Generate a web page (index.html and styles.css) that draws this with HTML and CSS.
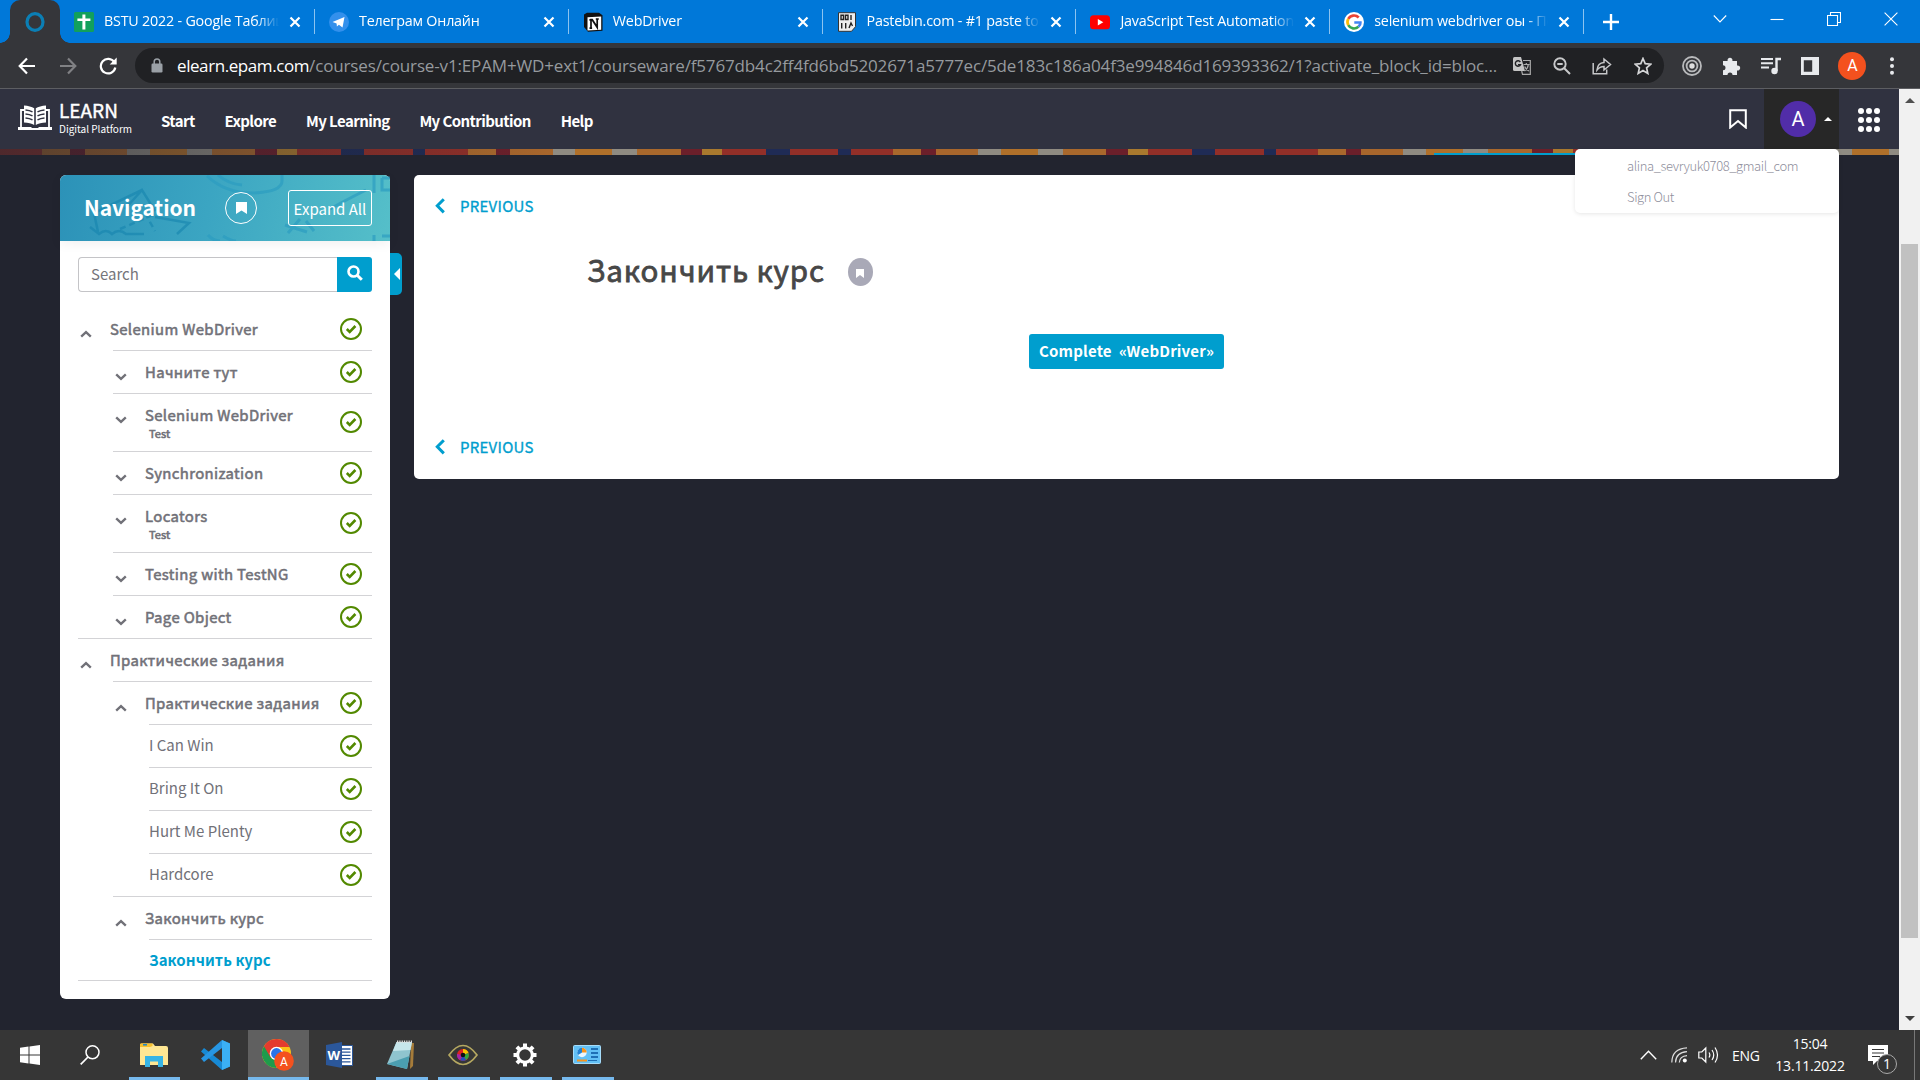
FILE: index.html
```html
<!DOCTYPE html>
<html lang="ru">
<head>
<meta charset="utf-8">
<title>Закончить курс</title>
<link rel="stylesheet" href="styles.css">
</head>
<body>
<svg class="defs" aria-hidden="true">
  <symbol id="x" viewBox="0 0 12 12"><path d="M1.5 1.5l9 9M10.5 1.5l-9 9" stroke="#fff" stroke-width="2.2"/></symbol>
  <symbol id="check" viewBox="0 0 22 22"><circle cx="11" cy="11" r="10" fill="none" stroke="#528900" stroke-width="2"/><path d="M6.8 11l2.9 2.9 5.7-5.9" fill="none" stroke="#528900" stroke-width="2.6"/></symbol>
  <symbol id="up" viewBox="0 0 12 8"><path d="M1.2 6.6L6 2.2l4.8 4.4" fill="none" stroke="#717178" stroke-width="2.4"/></symbol>
  <symbol id="down" viewBox="0 0 12 8"><path d="M1.2 1.4L6 5.8l4.8-4.4" fill="none" stroke="#717178" stroke-width="2.4"/></symbol>
  <symbol id="left" viewBox="0 0 10 16"><path d="M8.8 1.2L2.3 7.8l6.5 6.6" fill="none" stroke="#009ece" stroke-width="3"/></symbol>
</svg>

<header class="tabs">
  <div class="tab-active"><svg width="20" height="22" viewBox="0 0 20 22"><ellipse cx="10" cy="11" rx="8" ry="8.3" fill="none" stroke="#0b7fb5" stroke-width="3.2"/></svg></div>
  <div class="tab">
    <svg class="fav" viewBox="0 0 20 20"><rect width="20" height="20" rx="1.5" fill="#12a05c"/><path d="M8.4 2.5h3v4h5v2.6h-5v8.4h-3V9.100h-5V6.500h5z" fill="#fff"/></svg>
    <span class="tab-title">BSTU 2022 - Google Таблицы</span><svg class="close"><use href="#x"/></svg>
  </div>
  <div class="tab">
    <svg class="fav" viewBox="0 0 20 20"><circle cx="10" cy="10" r="10" fill="#3390ec"/><path d="M3.500 10L15.500 5l-2 10.500-3.600-2.700-2 1.800-.3-3.200z" fill="#fff"/></svg>
    <span class="tab-title">Телеграм Онлайн</span><svg class="close"><use href="#x"/></svg>
  </div>
  <div class="tab">
    <svg class="fav" viewBox="0 0 20 20"><path d="M1 2.500L4 .7h12l3.500 2.500v15.500L5 19.700 1 15z" fill="#111"/><path d="M4.500 5.200l13.700-.8v13.300l-13.700.9z" fill="#fff"/><path d="M8 16V7.700h1.200l5 7.600V7M6.400 7.800h2.500M12.800 7h3M6.500 16.200h2.600" fill="none" stroke="#111" stroke-width="1.700"/></svg>
    <span class="tab-title">WebDriver</span><svg class="close"><use href="#x"/></svg>
  </div>
  <div class="tab">
    <svg class="fav" viewBox="0 0 20 20"><path d="M1.500.7h17v14l-4 4.600h-13z" fill="#eee" stroke="#333"/><path d="M4 3.200h2.500v4.300H4zM8.500 3.200H11v4.300H8.500zM14 3v5M4.700 11v5.500M8.700 11v5.500M12 16l2-5 1.500 3" fill="none" stroke="#222" stroke-width="1.400"/></svg>
    <span class="tab-title">Pastebin.com - #1 paste tool</span><svg class="close"><use href="#x"/></svg>
  </div>
  <div class="tab">
    <svg class="fav" viewBox="0 0 20 20"><rect y="3.200" width="20" height="14" rx="3.500" fill="#f00"/><path d="M7.800 7l5.500 3.200-5.500 3.200z" fill="#fff"/></svg>
    <span class="tab-title">JavaScript Test Automation</span><svg class="close"><use href="#x"/></svg>
  </div>
  <div class="tab">
    <svg class="fav" viewBox="0 0 20 20"><circle cx="10" cy="10" r="10" fill="#fff"/><g fill="none" stroke-width="2.700"><path d="M14.700 5.500A6.500 6.500 0 0 0 4.300 6.900" stroke="#ea4335"/><path d="M4.300 6.900a6.500 6.500 0 0 0 0 6.200" stroke="#fbbc05"/><path d="M4.300 13.100a6.500 6.500 0 0 0 10.100 1.700" stroke="#34a853"/><path d="M14.400 14.800c1.500-1.300 2.100-2.900 2-4.300H10.300" stroke="#4285f4"/></g></svg>
    <span class="tab-title">selenium webdriver оы - Поиск</span><svg class="close"><use href="#x"/></svg>
  </div>
  <svg class="plus" viewBox="0 0 16 16"><path d="M8 0v16M0 8h16" stroke="#fff" stroke-width="2.400"/></svg>
  <div class="win">
    <svg width="14" height="14" viewBox="0 0 14 14"><path d="M.8 3.500L7 10l6.200-6.500"/></svg>
    <svg width="14" height="14" viewBox="0 0 14 14"><path d="M.5 7.500h13"/></svg>
    <svg width="14" height="14" viewBox="0 0 14 14"><path d="M.5 3.500h10v10H.5zM3.500 3.500v-3h10v10h-3"/></svg>
    <svg width="14" height="14" viewBox="0 0 14 14"><path d="M.6.6l12.800 12.800M13.400.6L.6 13.400"/></svg>
  </div>
</header>

<div class="toolbar">
  <div class="navbtns">
    <svg width="18" height="18" viewBox="0 0 18 18"><path d="M17 9H2M9 1.500L1.700 9 9 16.500" fill="none" stroke="#fff" stroke-width="2.200"/></svg>
    <svg width="18" height="18" viewBox="0 0 18 18"><path d="M1 9h15M9 1.500L16.300 9 9 16.500" fill="none" stroke="#808184" stroke-width="2.200"/></svg>
    <svg width="18" height="18" viewBox="0 0 18 18"><path d="M15.300 5.200A7.300 7.300 0 1 0 16.300 10.500" fill="none" stroke="#fff" stroke-width="2.200"/><path d="M17.700.6v7h-7z" fill="#fff"/></svg>
  </div>
  <div class="omnibox">
    <svg width="12" height="15" viewBox="0 0 12 15"><rect x=".5" y="5.500" width="11" height="9" rx="1.200" fill="#9aa0a6"/><path d="M3.200 6V3.800a2.800 2.800 0 0 1 5.600 0V6" fill="none" stroke="#9aa0a6" stroke-width="1.500"/></svg>
    <span class="url"><b>elearn.epam.com</b>/courses/course-v1:EPAM+WD+ext1/courseware/f5767db4c2ff4fd6bd5202671a5777ec/5de183c186a04f3e994846d169393362/1?activate_block_id=bloc...</span>
    <div class="omni-icons">
      <svg width="18" height="18" viewBox="0 0 18 18"><path d="M0 1.500Q0 0 1.500 0H8l4 14H1.500Q0 14 0 12.500z" fill="#c4c4c4"/><path d="M7.300 5A2.700 2.700 0 1 0 7.500 7.600H5" fill="none" stroke="#202124" stroke-width="1.400"/><path d="M10 3.500h7.300v13.800H9.500L8.700 14M10.500 7.500h6M13.300 6v1.500M11.500 14q3.500-2.500 3.800-6.500M11.700 9.500q1 3 4.300 4.500" fill="none" stroke="#aaa" stroke-width="1.200"/></svg>
      <svg width="18" height="18" viewBox="0 0 18 18"><circle cx="7" cy="7" r="5.700" fill="none" stroke="#c7c8ca" stroke-width="1.900"/><path d="M11 11l6 6M4.300 7h5.400" stroke="#c7c8ca" stroke-width="2"/></svg>
      <svg width="20" height="18" viewBox="0 0 20 18"><path d="M1.200 6v10.800h13.500v-4.300M5 13c.5-5 3.500-7.300 7-7.500V2l6.500 5.500L12 13V9.500c-3 0-5 1-7 3.500z" fill="none" stroke="#c7c8ca" stroke-width="1.500"/></svg>
      <svg width="18" height="18" viewBox="0 0 18 18"><path d="M9 1.500l2.200 5.200 5.600.5-4.200 3.700 1.200 5.500L9 13.500l-4.800 2.900 1.200-5.500L1.200 7.200l5.600-.5z" fill="none" stroke="#d5d6d8" stroke-width="1.700"/></svg>
    </div>
  </div>
  <div class="ext">
    <svg width="20" height="20" viewBox="0 0 20 20"><g fill="none" stroke="#b9babc" stroke-width="1.800"><circle cx="10" cy="10" r="9"/><circle cx="10" cy="10" r="5.400"/></g><circle cx="10" cy="10" r="2.700" fill="#ddd"/></svg>
    <svg width="20" height="20" viewBox="0 0 20 20"><path d="M1 5h4.600a2.500 2.500 0 1 1 4.800 0H15v4.600a2.500 2.500 0 1 1 0 4.800V19h-4.500a2.500 2.500 0 0 0-5 0H1v-4.700a2.500 2.500 0 0 0 0-5z" fill="#e8eaed"/></svg>
    <svg width="20" height="18" viewBox="0 0 20 18"><path d="M0 2h12M0 6.300h12M0 10.600h8" stroke="#e8eaed" stroke-width="2"/><path d="M15.500 14V2H20" fill="none" stroke="#e8eaed" stroke-width="2.400"/><circle cx="13.500" cy="14" r="3.200" fill="#e8eaed"/></svg>
    <svg width="18" height="18" viewBox="0 0 18 18"><path d="M0 0h18v18H0zM2.800 3.200v11.600h8.400V3.200z" fill="#e8eaed" fill-rule="evenodd"/></svg>
    <span class="profile">A</span>
    <svg width="4" height="18" viewBox="0 0 4 18"><g fill="#e8eaed"><circle cx="2" cy="2.200" r="2"/><circle cx="2" cy="9" r="2"/><circle cx="2" cy="15.800" r="2"/></g></svg>
  </div>
</div>

<div class="viewport">
  <div class="page">
    <header class="site">
      <a class="logo">
        <svg width="34" height="26" viewBox="0 0 34 26"><path d="M3 22V5h3M31 22V5h-3" fill="none" stroke="#fff" stroke-width="1.800"/><path d="M6 .5c4 .3 8 1.200 10.200 2.700V20C14 18.500 10 17.500 6 17.500zM28 .5c-4 .3-8 1.200-10.200 2.700V20C20 18.500 24 17.500 28 17.500z" fill="#fff"/><path d="M7.500 5q4 .3 7 1.800M7.500 9q4 .3 7 1.800M7.500 13q4 .3 7 1.800M26.500 5q-4 .3-7 1.800M26.500 9q-4 .3-7 1.800M26.500 13q-4 .3-7 1.800" fill="none" stroke="#303240" stroke-width="1.500"/><path d="M0 22h13l1 1h6l1-1h13v3H0z" fill="#fff"/></svg>
        <span class="logo-text"><span class="l1">LEARN</span><span class="l2">Digital Platform</span></span>
      </a>
      <nav><a>Start</a><a>Explore</a><a>My Learning</a><a>My Contribution</a><a>Help</a></nav>
      <div class="site-right">
        <svg class="bm" width="18" height="20" viewBox="0 0 18 20"><path d="M1.200 1.200h15.600V18.500L9 12l-7.800 6.500z" fill="none" stroke="#fff" stroke-width="2"/></svg>
        <div class="user"><span class="avatar">A</span><svg width="8" height="4" viewBox="0 0 8 4"><path d="M0 4l4-4 4 4z" fill="#fff"/></svg>
          <div class="menu"><a>alina_sevryuk0708_gmail_com</a><a>Sign Out</a></div>
        </div>
        <svg class="grid" width="22" height="24" viewBox="0 0 22 24"><g fill="#fff"><circle cx="3" cy="3" r="3"/><circle cx="11" cy="3" r="3"/><circle cx="19" cy="3" r="3"/><circle cx="3" cy="12" r="3"/><circle cx="11" cy="12" r="3"/><circle cx="19" cy="12" r="3"/><circle cx="3" cy="21" r="3"/><circle cx="11" cy="21" r="3"/><circle cx="19" cy="21" r="3"/></g></svg>
      </div>
    </header>
    <div class="banner"><i></i></div>
    <div class="content">
      <aside class="side">
        <div class="side-head">
          <svg class="art" width="330" height="66" viewBox="0 0 330 66"><g fill="none" stroke="#1683ad" stroke-opacity=".6" stroke-width="2.500"><path d="M65 34L82 15l13 21M38 57L34 38l48-23M95 42l34 6-12 11M30 52l9 7q7-6 13 0 7-6 14 0h18"/><path d="M60 54l35-15M85 38l10 18" stroke-dasharray="6 4"/></g><g fill="none" stroke="#2c9cc0" stroke-opacity=".7" stroke-width="3"><path d="M147 1q18 17 45 17 30-1 30-12V0M158 0q10 9 24 10M148 60q5 6 12 6M163 61q8 5 13 5M225 50l22 7M240 44l-12 14M246 46l8 10M270 34q14-8 36-19M314 0v18M322 3h8M322 3v12h8M314 60v6M322 61h8"/></g></svg>
          <h2>Navigation</h2>
          <span class="ring"><svg width="11" height="12" viewBox="0 0 11 12"><path d="M0 0h11v12L5.500 8.500 0 12z" fill="#fff"/></svg></span>
          <button class="expand">Expand All</button>
        </div>
        <div class="search"><span class="field">Search</span><span class="go"><svg width="16" height="16" viewBox="0 0 16 16"><circle cx="6.500" cy="6.500" r="5" fill="none" stroke="#fff" stroke-width="2.600"/><path d="M10.200 10.200l4.600 4.600" stroke="#fff" stroke-width="3"/></svg></span></div>
        <span class="toggle"><svg width="6" height="12" viewBox="0 0 6 12"><path d="M6 0v12L0 6z" fill="#fff"/></svg></span>
        <ul class="tree">
          <li>
            <div class="row"><svg class="chev"><use href="#up"/></svg><span class="name">Selenium WebDriver</span><svg class="ok"><use href="#check"/></svg></div>
            <ul class="sub">
              <li><div class="row"><svg class="chev"><use href="#down"/></svg><span class="name">Начните тут</span><svg class="ok"><use href="#check"/></svg></div></li>
              <li><div class="row tall"><svg class="chev"><use href="#down"/></svg><span class="name">Selenium WebDriver<small>Test</small></span><svg class="ok"><use href="#check"/></svg></div></li>
              <li><div class="row"><svg class="chev"><use href="#down"/></svg><span class="name">Synchronization</span><svg class="ok"><use href="#check"/></svg></div></li>
              <li><div class="row tall"><svg class="chev"><use href="#down"/></svg><span class="name">Locators<small>Test</small></span><svg class="ok"><use href="#check"/></svg></div></li>
              <li><div class="row"><svg class="chev"><use href="#down"/></svg><span class="name">Testing with TestNG</span><svg class="ok"><use href="#check"/></svg></div></li>
              <li><div class="row"><svg class="chev"><use href="#down"/></svg><span class="name">Page Object</span><svg class="ok"><use href="#check"/></svg></div></li>
            </ul>
          </li>
          <li>
            <div class="row"><svg class="chev"><use href="#up"/></svg><span class="name">Практические задания</span></div>
            <ul class="sub">
              <li><div class="row"><svg class="chev"><use href="#up"/></svg><span class="name">Практические задания</span><svg class="ok"><use href="#check"/></svg></div>
                <ul class="leaf">
                  <li><div class="row"><span>I Can Win</span><svg class="ok"><use href="#check"/></svg></div></li>
                  <li><div class="row"><span>Bring It On</span><svg class="ok"><use href="#check"/></svg></div></li>
                  <li><div class="row"><span>Hurt Me Plenty</span><svg class="ok"><use href="#check"/></svg></div></li>
                  <li><div class="row"><span>Hardcore</span><svg class="ok"><use href="#check"/></svg></div></li>
                </ul>
              </li>
              <li><div class="row"><svg class="chev"><use href="#up"/></svg><span class="name">Закончить курс</span></div>
                <ul class="leaf"><li><div class="row current"><span>Закончить курс</span></div></li></ul>
              </li>
            </ul>
          </li>
        </ul>
      </aside>
      <main class="card">
        <a class="prev"><svg width="10" height="16"><use href="#left"/></svg>PREVIOUS</a>
        <div class="title"><h1>Закончить курс</h1><span class="dot"><svg width="8" height="9" viewBox="0 0 8 9"><path d="M0 0h8v9L4 6 0 9z" fill="#fff"/></svg></span></div>
        <button class="complete">Complete&nbsp; «WebDriver»</button>
        <a class="prev bottom"><svg width="10" height="16"><use href="#left"/></svg>PREVIOUS</a>
      </main>
    </div>
  </div>
  <div class="scroll">
    <svg width="10" height="5" viewBox="0 0 10 5"><path d="M0 5l5-5 5 5z" fill="#505050"/></svg>
    <div class="thumb"></div>
    <svg width="10" height="5" viewBox="0 0 10 5"><path d="M0 0l5 5 5-5z" fill="#404040"/></svg>
  </div>
</div>

<footer class="taskbar">
  <div class="app"><svg width="20" height="20" viewBox="0 0 20 20"><path d="M0 2.800L8.500 1.500v8H0zM9.500 1.400L20 0v9.500H9.500zM0 10.500h8.500v8L0 17.200zM9.500 10.500H20V20L9.500 18.600z" fill="#fff"/></svg></div>
  <div class="app find"><svg width="20" height="20" viewBox="0 0 20 20"><circle cx="12.500" cy="7.300" r="6.500" fill="none" stroke="#fff" stroke-width="1.500"/><path d="M8 12L.7 19.300" stroke="#fff" stroke-width="1.700"/></svg></div>
  <div class="app open"><svg width="28" height="24" viewBox="0 0 28 24"><path d="M0 2Q0 .5 1.500.5H13l2 2.500h11q2 0 2 2v17H0z" fill="#ffe793"/><path d="M0 4V1.500Q0 .5 1 .5h11.500V3L10 4z" fill="#f7c02d"/><path d="M3 1.800h4" stroke="#1b86c9" stroke-width="1.500"/><path d="M5 24V13h18v11h-5v-5.500h-8V24z" fill="#36b4e5"/></svg></div>
  <div class="app"><svg width="30" height="30" viewBox="0 0 30 30"><path d="M22 0l8 3.500v23L22 30 1 11.500 4 8l18 14V8.500z" fill="#1789d4"/><path d="M22 8L4 22l-3-3.500L22 0z" fill="#2796e3"/><path d="M22 0l8 3.500v23L22 30z" fill="#3bb0f5"/></svg></div>
  <div class="app open active"><svg width="32" height="32" viewBox="0 0 32 32"><circle cx="14.500" cy="14.500" r="14.500" fill="#fbc116"/><path d="M14.500 14.500L2 7.200A14.500 14.500 0 0 0 14.500 29z" fill="#1e9b4c"/><path d="M14.500 8h12.900A14.500 14.500 0 0 0 2 7.200l7 12z" fill="#e33b2e"/><circle cx="14.500" cy="14.500" r="6.800" fill="#fff"/><circle cx="14.500" cy="14.500" r="5.400" fill="#2a74e8"/><circle cx="22" cy="22" r="9.800" fill="#f4511e"/><text x="22" y="26.500" text-anchor="middle" class="badge-letter">A</text></svg></div>
  <div class="app"><svg width="27" height="26" viewBox="0 0 27 26"><path d="M14 3.500h12.500v20H14z" fill="#fff" stroke="#2b579a"/><path d="M16 7h8.500M16 10.200h8.500M16 13.400h8.500M16 16.600h8.500M16 19.800h8.500" stroke="#2b579a" stroke-width="1.300"/><path d="M0 3L16 0v26L0 23z" fill="#2b579a"/><text x="7.700" y="18" text-anchor="middle" class="word-letter">W</text></svg></div>
  <div class="app open"><svg width="28" height="32" viewBox="0 0 28 32"><path d="M24 4h3l-1 23-3 3z" fill="#a67c3a"/><path d="M9.500 3h15.500L20 30 0 25z" fill="#8fc4cf"/><path d="M9.500 3h15.500l-1.500 8L6 12z" fill="#c7e6eb"/><path d="M20 30l2.500-13L0 25z" fill="#4b9eb0"/><path d="M10 2.800h15" stroke="#ddd" stroke-width="2.500" stroke-dasharray="1.300 1"/></svg></div>
  <div class="app open"><svg width="30" height="22" viewBox="0 0 30 22"><path d="M1 11Q8 1.500 15 1.500T29 11Q22 20.500 15 20.500T1 11z" fill="none" stroke="#b5a861" stroke-width="1.700"/><circle cx="15" cy="11" r="6" fill="#d22"/><path d="M15 11V5a6 6 0 0 1 5.500 4z" fill="#f8c400"/><path d="M15 11l5.500-2a6 6 0 0 1-2.500 7z" fill="#2fa83f"/><path d="M15 11l3 5a6 6 0 0 1-6 0z" fill="#244fc0"/><path d="M15 11l-3 5a6 6 0 0 1-3-6z" fill="#a226a8"/><circle cx="15" cy="11" r="2.300" fill="#111"/></svg></div>
  <div class="app open"><svg width="24" height="24" viewBox="0 0 24 24"><circle cx="12" cy="12" r="7.300" fill="none" stroke="#fff" stroke-width="3"/><path d="M12 .5v4M12 19.500v4M.5 12h4M19.500 12h4M3.900 3.900l2.800 2.800M17.300 17.300l2.800 2.800M3.900 20.100l2.800-2.800M17.300 6.700l2.800-2.800" stroke="#fff" stroke-width="4"/></svg></div>
  <div class="app open"><svg width="28" height="20" viewBox="0 0 28 20"><rect x=".5" y=".5" width="27" height="18" rx="1" fill="#62c0f5" stroke="#a6dcfa"/><circle cx="9" cy="7.500" r="4.700" fill="#e8f6ff"/><path d="M9 7.500V2.800a4.700 4.700 0 0 1 4.700 4.700z" fill="#f7941d"/><path d="M9 7.500l-4 2.500a4.700 4.700 0 0 1 4-7.200z" fill="#2281d1"/><path d="M18 4h7M18 8h7M18 12h7" stroke="#1f6fb5" stroke-width="2"/><path d="M4 15.500h10" stroke="#f7941d" stroke-width="2"/><path d="M15 15.500h9" stroke="#1f6fb5"/></svg></div>
  <div class="tray">
    <svg width="17" height="10" viewBox="0 0 17 10"><path d="M.8 9.200L8.500 1.200l7.700 8" fill="none" stroke="#fff" stroke-width="1.400"/></svg>
    <svg class="wifi" width="17" height="16" viewBox="0 0 17 16"><g fill="none" stroke="#ddd" stroke-width="1.200"><path d="M.8 15.500Q1 1.500 16 .8M4.500 15.500Q4.800 5.500 16 4.700M8.300 15.500Q8.600 9.200 16 8.600"/></g><circle cx="13.800" cy="13.400" r="2" fill="#fff"/></svg>
    <svg class="vol" width="21" height="18" viewBox="0 0 21 18"><g fill="none" stroke="#fff" stroke-width="1.200"><path d="M.8 6h3l4-4v14l-4-4h-3zM11 6.500q1.700 2.500 0 5M14 4q3.500 5 0 10M17 1.500q5 7.500 0 15"/></g></svg>
    <span class="lang">ENG</span>
    <span class="clock"><span>15:04</span><span>13.11.2022</span></span>
    <span class="note"><svg width="20" height="20" viewBox="0 0 20 20"><path d="M0 0h20v16H9l-4 4v-4H0z" fill="#fff"/><path d="M4 4.500h12M4 8h12M4 11.500h8" stroke="#363636" stroke-width="1.200"/></svg><i>1</i></span>
    <span class="peek"></span>
  </div>
</footer>
</body>
</html>
```
FILE: styles.css
```css
* { box-sizing: border-box; }
body {
  margin: 0; width: 1920px; height: 1080px; overflow: hidden;
  display: flex; flex-direction: column; background: #22242f;
  font-family: "Noto Sans CJK SC", "Noto Sans", sans-serif;
}
svg { display: block; flex: none; }
ul { list-style: none; margin: 0; padding: 0; }
button { font-family: inherit; padding: 0; }
.defs { position: absolute; width: 0; height: 0; }

/* browser tabs */
.tabs, .toolbar, .taskbar { font-family: "Open Sans", "Noto Sans", sans-serif; }
.tabs { flex: none; height: 43px; display: flex; align-items: center; background: #0078d9; padding-left: 10px; color: #fff; }
.tab-active { position: relative; width: 50px; height: 43px; background: #35363a; border-radius: 10px 10px 0 0; display: flex; align-items: center; justify-content: center; }
.tab-active::before, .tab-active::after { content: ""; position: absolute; bottom: 0; width: 10px; height: 10px; }
.tab-active::before { left: -10px; background: radial-gradient(circle at 0 0, transparent 9.5px, #35363a 10px); }
.tab-active::after { right: -10px; background: radial-gradient(circle at 100% 0, transparent 9.5px, #35363a 10px); }
.tab { width: 253.800px; height: 25px; padding: 0 13px 0 14px; display: flex; align-items: center; border-right: 1px solid #8cc3f0; }
.tab-active + .tab { width: 255px; }
.fav { width: 20px; height: 20px; }
.tab-title { flex: 1; margin: -2px 10px 0; height: 24px; line-height: 24px; font-size: 14.300px; letter-spacing: -.2px; white-space: nowrap; overflow: hidden; -webkit-mask: linear-gradient(90deg, #000 calc(100% - 22px), transparent); mask: linear-gradient(90deg, #000 calc(100% - 22px), transparent); }
.close { width: 12px; height: 12px; }
.plus { width: 16px; height: 16px; margin-left: 19px; }
.win { margin: 0 22px 5px auto; display: flex; gap: 43px; }
.win path { fill: none; stroke: #fff; stroke-width: 1.100; }

/* address bar */
.toolbar { flex: none; height: 46px; display: flex; align-items: center; background: #35363a; border-bottom: 1px solid #5d5e62; padding: 0 26px 0 18px; }
.navbtns { display: flex; gap: 22.500px; width: 117px; }
.omnibox { width: 1529px; height: 35px; border-radius: 18px; background: #202124; display: flex; align-items: center; padding: 0 12px 0 16px; }
.url { margin-left: 14px; width: 1321px; white-space: nowrap; color: #969a9e; font-size: 17px; letter-spacing: -.145px; }
.url b { font-weight: 400; color: #fff; letter-spacing: -.42px; }
.omni-icons { margin-left: auto; display: flex; gap: 21.700px; }
.ext { flex: 1; margin-left: 18px; display: flex; align-items: center; justify-content: space-between; }
.profile { width: 28px; height: 28px; margin-right: 4px; border-radius: 50%; background: #f4511e; color: #fff; font: 16px/28px Roboto, sans-serif; text-align: center; }

/* page */
.viewport { height: 941px; display: flex; }
.page { flex: none; width: 1899px; }
.site { height: 60px; background: #303240; display: flex; align-items: center; padding-left: 18px; color: #fff; }
.logo { display: flex; width: 143px; gap: 7px; align-items: center; }
.logo svg { margin-bottom: 2px; }
.logo-text { display: flex; flex-direction: column; margin-top: -5px; }
.l1 { font-size: 19px; line-height: 24px; -webkit-text-stroke: .4px #fff; }
.l2 { font-size: 10px; line-height: 13px; white-space: nowrap; }
.site nav { display: flex; gap: 29.800px; font-size: 15px; font-weight: 700; letter-spacing: -.58px; line-height: 20px; padding-top: 4px; }
.site-right { margin-left: auto; display: flex; align-items: center; height: 60px; }
.bm { margin-right: 17px; }
.user { position: relative; width: 75px; height: 60px; background: #272727; display: flex; align-items: center; padding-left: 16px; gap: 8px; }
.avatar { width: 36px; height: 36px; border-radius: 50%; background: #512da8; font: 20px/37px Roboto, sans-serif; text-align: center; }
.grid { margin: 2px 19px 0; }
.menu { position: absolute; right: 0; top: 60px; z-index: 2; width: 264px; height: 64px; background: #fff; border-radius: 5px; box-shadow: 0 1px 4px rgba(0,0,0,.1); padding: 1px 0 0 52px; display: flex; flex-direction: column; }
.menu a { color: #8f8f9c; font-size: 13px; font-weight: 300; letter-spacing: -.4px; line-height: 31px; }
.banner { height: 6px; position: relative; background:
  linear-gradient(90deg, rgba(34,36,47,.6), rgba(34,36,47,0) 550px),
  repeating-linear-gradient(90deg, #922f28 0 42px, #a9682c 42px 70px, #6b1f2a 70px 85px, #a8662c 85px 127px, #8f8b82 127px 150px, #b0702a 150px 187px, #8f8b82 187px 212px, #a9682c 212px 255px, #6b1f2a 255px 277px, #a9792e 277px 297px, #922f28 297px 341px, #1f2b55 341px 364px, #922f28 364px 413px, #1f2b55 413px 425.500px); }
.banner i { position: absolute; left: 1434px; bottom: 0; width: 141px; height: 2px; background: #009ece; }
.content { padding: 20px 60px; display: flex; align-items: flex-start; gap: 24px; }

.side { position: relative; width: 330px; height: 824px; background: #fff; border-radius: 6px; flex: none; }
.side-head { position: relative; height: 66px; border-radius: 6px 6px 0 0; background: linear-gradient(100deg, #2c92b8, #3ba5c2 45%, #55bfc9); display: flex; align-items: center; padding: 0 18px 0 24px; color: #fff; box-shadow: 0 3px 12px rgba(0,0,0,.06); }
.side-head > * { position: relative; }
.side-head > .art { position: absolute; left: 0; top: 0; }
h2 { margin: -2px 0 0; font-size: 21px; font-weight: 700; letter-spacing: -.06px; line-height: 30px; width: 141px; }
.ring { width: 32px; height: 32px; border: 1px solid #fff; border-radius: 50%; display: flex; align-items: center; justify-content: center; }
.expand { margin-left: auto; width: 84px; height: 36px; border: 1px solid #fff; border-radius: 3px; background: none; color: #fff; font-size: 15px; line-height: 31px; white-space: nowrap; }
.search { margin: 16px 18px 0; height: 35px; display: flex; }
.field { flex: 1; border: 1px solid #c4c4c7; border-right: 0; border-radius: 4px 0 0 4px; padding-left: 12px; font-size: 15px; line-height: 32px; color: #75757a; }
.go { width: 35px; background: #009ece; border-radius: 0 3px 3px 0; display: flex; align-items: center; justify-content: center; padding-bottom: 3px; }
.toggle { position: absolute; left: 330px; top: 78px; width: 12px; height: 42px; background: #009ece; border-radius: 0 5px 5px 0; display: flex; align-items: center; padding-left: 4px; }

.tree { margin: 16px 18px 0; color: #717178; font-size: 15px; }
.tree > li { border-bottom: 1px solid #d3d3d6; }
.row { height: 42px; display: flex; padding: 9px 10px 0 2px; line-height: 22px; }
.name { margin: 1px 0 0 19px; font-size: 14.900px; -webkit-text-stroke: .55px #717178; letter-spacing: .37px; white-space: nowrap; }
.chev { width: 12px; height: 8px; margin: 13px -1px 0 0; }
.ok { width: 22px; height: 22px; margin-left: auto; margin-top: 1px; }
.tall { height: 57px; }
.tall .ok { margin-top: 8px; }
small { display: block; font-size: 11px; line-height: 14px; margin-left: 4px; letter-spacing: .1px; -webkit-text-stroke: .6px #717178; }
.sub { margin-left: 35px; }
.sub > li, .leaf > li { border-top: 1px solid #d3d3d6; }
.leaf { margin-left: 36px; }
.leaf .row { padding-left: 0; }
.leaf .current { height: 40px; padding-top: 9px; color: #009ece; font-weight: 700; font-size: 15px; letter-spacing: .08px; }

.card { width: 1425px; height: 304px; background: #fff; border-radius: 5px; padding: 20px 21px; display: flex; flex-direction: column; align-items: flex-start; }
.prev { display: flex; align-items: center; gap: 15px; height: 22px; color: #009ece; font-size: 15px; line-height: 22px; letter-spacing: .25px; -webkit-text-stroke: .35px #009ece; }
.title { display: flex; align-items: center; margin: 28px 0 0 152px; height: 48px; gap: 23px; }
h1 { margin: 0; font-size: 29.500px; font-weight: 400; line-height: 48px; color: #474747; -webkit-text-stroke: .8px #474747; letter-spacing: .9px; }
.dot { width: 25px; height: 28px; margin-top: 5px; border-radius: 50%; background: #a9a9b7; display: flex; align-items: center; justify-content: center; padding-top: 4px; }
.complete { margin: 41px 0 0 594px; width: 195px; height: 35px; background: #009ece; border: 0; border-radius: 3px; color: #fff; font-size: 15px; font-weight: 700; letter-spacing: .18px; line-height: 31px; padding-bottom: 2px; white-space: nowrap; }
.bottom { margin-top: 67px; }

.scroll { width: 21px; background: #f1f1f1; display: flex; flex-direction: column; align-items: center; padding: 9px 0; }
.thumb { width: 17px; height: 694px; margin: 141px 0 auto; background: #c1c1c1; }

/* taskbar */
.taskbar { flex: none; height: 50px; background: #363636; display: flex; color: #fff; }
.app { width: 61.600px; margin-right: .3px; height: 50px; display: flex; align-items: center; justify-content: center; position: relative; padding-right: 2px; }
.find { padding-right: 6px; }
.open::after { content: ""; position: absolute; left: 5px; right: 5px; bottom: 0; height: 3px; background: #76b9ed; }
.active { background: #606060; padding: 0; }
.active::after { left: 0; right: 0; }
.badge-letter { font: 12px Roboto, sans-serif; fill: #fff; }
.word-letter { font: 700 13px "Open Sans", sans-serif; fill: #fff; }
.tray { margin-left: auto; display: flex; align-items: center; width: 280px; }
.wifi { margin-left: 14px; }
.vol { margin-left: 10px; }
.lang { margin-left: 13px; width: 30px; font-size: 14px; letter-spacing: -.3px; }
.clock { margin-left: 8px; width: 80px; display: flex; flex-direction: column; align-items: center; font-size: 14px; line-height: 22px; letter-spacing: -.2px; margin-top: -1px; }
.note { position: relative; margin-left: 18px; }
.note i { position: absolute; left: 9px; top: 9px; width: 20px; height: 20px; border: 1px solid #aaa; border-radius: 50%; background: #363636; font-style: normal; font-size: 14px; line-height: 18px; text-align: center; }
.peek { width: 1px; height: 50px; margin: 0 5px 0 auto; background: #777; }
```
